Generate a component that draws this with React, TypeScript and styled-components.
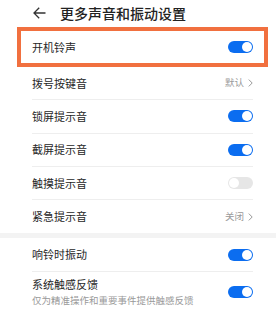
import React from "react";
import styled, { createGlobalStyle } from "styled-components";

const Global = createGlobalStyle`
  html, body { margin: 0; padding: 0; background: #ffffff; }
  body { font-family: "Noto Sans CJK SC", "Noto Sans", sans-serif; width: 276px; }
`;

const Page = styled.div`
  width: 276px;
  height: 323px;
  overflow: hidden;
  background: #ffffff;
  display: flex;
  flex-direction: column;
`;

const Header = styled.div`
  height: 25px;
  display: flex;
  align-items: center;
  padding-left: 33px;
  gap: 14px;
`;

const Title = styled.div`
  font-size: 14px;
  font-weight: 500;
  color: #222;
  line-height: 1;
`;

const Highlight = styled.div`
  margin: 2px 8px 0 17px;
  height: 40px;
  box-sizing: border-box;
  border: 4px solid #f1703f;
  padding: 0 11px;
  display: flex;
  align-items: center;
  justify-content: space-between;
`;

const Row = styled.div<{ $h?: number; $divider?: boolean }>`
  height: ${(p) => p.$h ?? 33.3}px;
  box-sizing: border-box;
  margin: 0 23px 0 32px;
  display: flex;
  align-items: center;
  justify-content: space-between;
  border-bottom: ${(p) => (p.$divider ? "1px solid #eeeeee" : "none")};
`;

const Label = styled.div`
  font-size: 11px;
  color: #262626;
  line-height: 1;
`;

const Stack = styled.div`
  display: flex;
  flex-direction: column;
  gap: 6px;
`;

const Sub = styled.div`
  font-size: 9.5px;
  color: #999;
  line-height: 1;
`;

const Value = styled.div`
  display: flex;
  align-items: center;
  gap: 4px;
  font-size: 9.5px;
  color: #999;
  line-height: 1;
`;

const Band = styled.div`
  height: 5px;
  background: #f3f3f3;
`;

const Track = styled.div<{ $on: boolean }>`
  width: 25px;
  height: 12px;
  border-radius: 6px;
  background: ${(p) => (p.$on ? "#0b6df0" : "#e6e6e6")};
  display: flex;
  align-items: center;
  justify-content: ${(p) => (p.$on ? "flex-end" : "flex-start")};
  padding: 0 1px;
  box-sizing: border-box;
`;

const Knob = styled.div`
  width: 10px;
  height: 10px;
  border-radius: 50%;
  background: #ffffff;
`;

const Toggle = ({ on }: { on: boolean }) => (
  <Track $on={on}>
    <Knob />
  </Track>
);

const Chevron = () => (
  <svg width="5" height="8" viewBox="0 0 5 8">
    <path d="M0.8 0.6 L4.2 4 L0.8 7.4" fill="none" stroke="#999" strokeWidth="1" />
  </svg>
);

const BackArrow = () => (
  <svg width="13" height="12" viewBox="0 0 13 12">
    <path d="M12.5 6 H1 M6.2 0.8 L1 6 L6.2 11.2" fill="none" stroke="#333" strokeWidth="1.3" />
  </svg>
);

export default function App() {
  return (
    <>
      <Global />
      <Page>
        <Header>
          <BackArrow />
          <Title>更多声音和振动设置</Title>
        </Header>
        <Highlight>
          <Label>开机铃声</Label>
          <Toggle on />
        </Highlight>
        <Row $divider>
          <Label>拨号按键音</Label>
          <Value>默认<Chevron /></Value>
        </Row>
        <Row $divider>
          <Label>锁屏提示音</Label>
          <Toggle on />
        </Row>
        <Row $divider>
          <Label>截屏提示音</Label>
          <Toggle on />
        </Row>
        <Row $divider>
          <Label>触摸提示音</Label>
          <Toggle on={false} />
        </Row>
        <Row>
          <Label>紧急提示音</Label>
          <Value>关闭<Chevron /></Value>
        </Row>
        <Band />
        <Row $h={34} $divider>
          <Label>响铃时振动</Label>
          <Toggle on />
        </Row>
        <Row $h={40}>
          <Stack>
            <Label>系统触感反馈</Label>
            <Sub>仅为精准操作和重要事件提供触感反馈</Sub>
          </Stack>
          <Toggle on />
        </Row>
      </Page>
    </>
  );
}
